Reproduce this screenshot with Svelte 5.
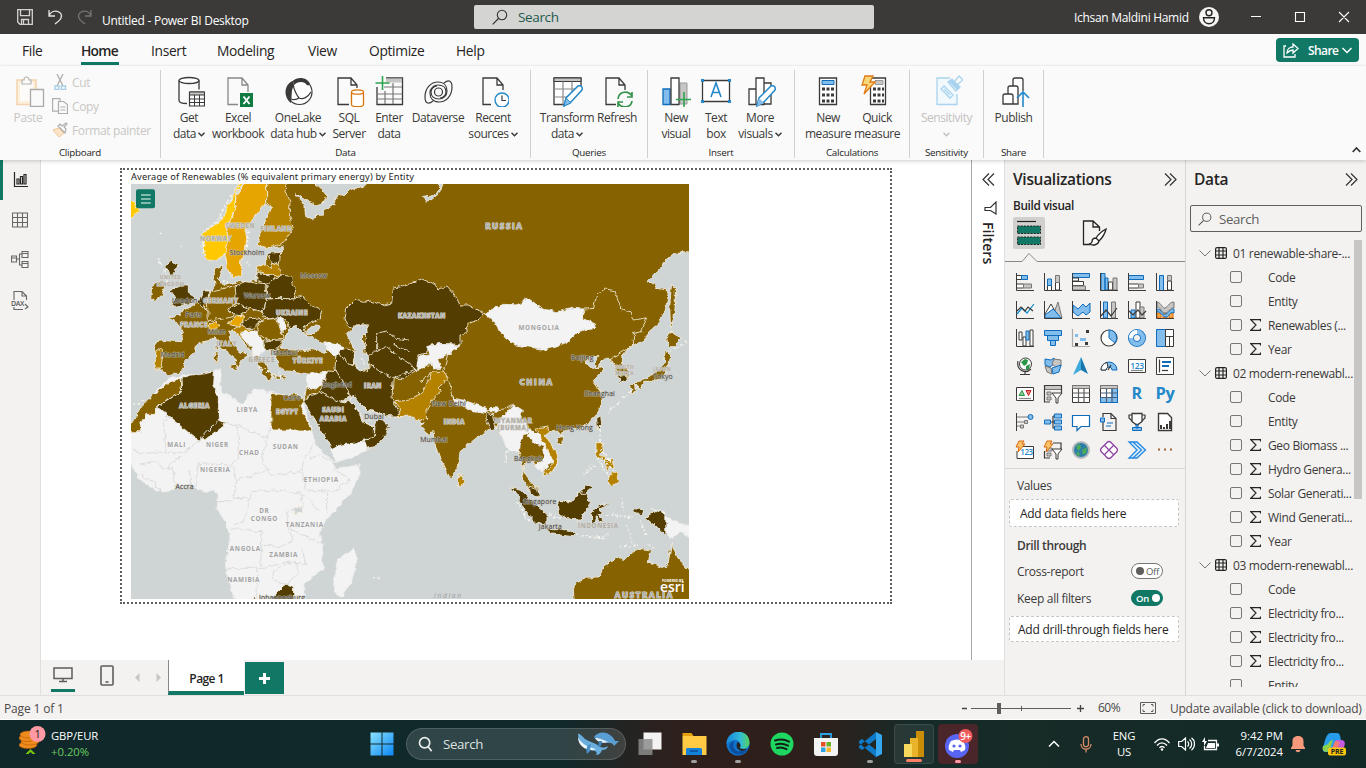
<script>
  const K = '#3b3a39';
  const B = '#0f6cbd';
  const ribbon = [
    { name: 'Data', w: 370, pad: 4, items: [
      { w: 48, l: ['Get', 'data'], dd: 1, svg: `<path d="M6 5.500v20c0 2 3 3 8 3M26 5.500v9" fill="none" stroke="${K}" stroke-width="1.3"/><ellipse cx="16" cy="5.500" rx="10" ry="3" fill="#fff" stroke="${K}" stroke-width="1.3"/><path d="M16.500 17h15v14h-15z" fill="#fff" stroke="${K}" stroke-width="1.200"/><path d="M16.500 17h15v3h-15z" fill="#c8c6c4" stroke="${K}"/><path d="M16.500 24h15M16.500 27.500h15M21.500 20v11M26.500 20v11" stroke="${K}"/>` },
      { w: 50, l: ['Excel', 'workbook'], svg: `<path d="M16 29.500H6V3h14l6 7v7M20 3v7h6" fill="none" stroke="#888" stroke-width="1.300"/><rect x="18" y="18" width="13" height="14" fill="#107c41"/><path d="M21.500 21.500l6 7.500M27.500 21.500l-6 7.500" stroke="#fff" stroke-width="2"/>` },
      { w: 70, l: ['OneLake', 'data hub'], dd: 1, svg: `<circle cx="17.500" cy="17" r="12.500" fill="#fff" stroke="${K}" stroke-width="1.200"/><path d="M11 6C2 9 1 22 9 28c1-7 0-13 3-18z" fill="${K}"/><path d="M11 6C15 1 26 2 28 9c-1 2-3 2-5-1-4-2-8-1-11 2z" fill="${K}"/><path d="M11 9c1 6 3 10 6 14 4 2 9-1 12-6M17 23c-3 2-5 2-8 1" fill="none" stroke="${K}" stroke-width="1.300"/>` },
      { w: 32, l: ['SQL', 'Server'], svg: `<path d="M16 29.500H5V3h13l6 7v3M18 3v7h6" fill="none" stroke="${K}" stroke-width="1.300"/><path d="M18.500 17.500v12c0 3 12 3 12 0v-12" fill="#fff" stroke="#d8750a" stroke-width="1.300"/><ellipse cx="24.500" cy="17" rx="6" ry="2.200" fill="#fff" stroke="#d8750a" stroke-width="1.300"/>` },
      { w: 48, l: ['Enter', 'data'], svg: `<path d="M4 12v17.500h25.500V3H13" fill="none" stroke="${K}" stroke-width="1.300"/><path d="M13 3.500h16v4H13z" fill="#c8c6c4"/><path d="M11 12h18M4 19h25M4 24h25M12 16v13M20 8v21" stroke="#777" stroke-width="1.200"/><path d="M9.500 1v14M2.500 8h14" stroke="#2ea44f" stroke-width="1.600"/>` },
      { w: 50, l: ['Dataverse'], svg: `<g fill="none" stroke="${K}" stroke-width="1.200"><path d="M22 8c5-4 8-2 8 4 0 9-6 15-13 15-6 0-9-4-9-9s4-8 8-8c5 0 8 3 8 7 0 3-3 6-6 6"/><path d="M11 26c-5 4-8 2-8-4C3 13 9 7 16 7c6 0 9 4 9 9s-4 8-8 8c-5 0-8-3-8-7 0-3 3-6 6-6"/><circle cx="16.500" cy="17" r="4"/></g>` },
      { w: 60, l: ['Recent', 'sources'], dd: 1, svg: `<path d="M14 29.500H6V3h14l6 7v5M20 3v7h6" fill="none" stroke="${K}" stroke-width="1.300"/><circle cx="25" cy="25" r="7" fill="#fff" stroke="#2488c9" stroke-width="1.400"/><path d="M25 20.500v5h4" fill="none" stroke="${K}" stroke-width="1.200"/>` }
    ] },
    { name: 'Queries', w: 117, pad: 10, items: [
      { w: 52, l: ['Transform', 'data'], dd: 1, svg: `<path d="M13 29.500H3V3h27v8" fill="#fff" stroke="${K}" stroke-width="1.300"/><path d="M3 3h27v3.500H3z" fill="#c8c6c4" stroke="${K}"/><path d="M3 14h22M3 22h14M12 6.500v23M21 6.500v12" stroke="#888" stroke-width="1.200"/><path d="M13 31l2-8 12-12c3-1 5 1 4 4L20 27z" fill="#fff" stroke="#2488c9" stroke-width="1.500"/><path d="M13 31l2-8 5 5z" fill="#83bdeb" stroke="#2488c9"/>` },
      { w: 48, l: ['Refresh'], svg: `<path d="M15 29.500H5V3h13l6 7v5M18 3v7h6" fill="none" stroke="${K}" stroke-width="1.300"/><path d="M17 24c1-8 10-9 14-3M31 17v5h-5M31 26c-1 7-10 8-14 2M17 32v-5h5" fill="none" stroke="#37924c" stroke-width="1.700"/>` }
    ] },
    { name: 'Insert', w: 147, pad: 8, items: [
      { w: 40, l: ['New', 'visual'], svg: `<path d="M3 14h7v15.500H3z" fill="#83bdeb" stroke="${B}" stroke-width="1.300"/><path d="M20 8h7v21h-7z" fill="#c8c6c4" stroke="#999"/><path d="M11 3h8v26.500h-8z" fill="#fff" stroke="${K}" stroke-width="1.300"/><path d="M24 17v15M16 24.500h15" stroke="#2ea44f" stroke-width="1.600"/>` },
      { w: 40, l: ['Text', 'box'], svg: `<path d="M2.500 5.500h27v21h-27z" fill="#fff" stroke="${K}" stroke-width="1.300"/><path d="M1 4h3v3H1zM28 4h3v3h-3zM1 25h3v3H1zM28 25h3v3h-3z" fill="#2488c9"/><path d="M11 22l5-14 5 14M12.500 17.500h7" fill="none" stroke="#2488c9" stroke-width="1.600"/>` },
      { w: 48, l: ['More', 'visuals'], dd: 1, svg: `<path d="M5 14h7v15.500H5zM12 3h8v26.500h-8zM20 8h7v21h-7z" fill="#fff" stroke="${K}" stroke-width="1.300"/><path d="M13 31l2-8 12-12c3-1 5 1 4 4L20 27z" fill="#fff" stroke="#2488c9" stroke-width="1.500"/><path d="M13 31l2-8 5 5z" fill="#83bdeb"/>` }
    ] },
    { name: 'Calculations', w: 115, pad: 9, items: [
      { w: 48, l: ['New', 'measure'], svg: `<path d="M7.500 3h17v26.500h-17z" fill="#fff" stroke="${K}" stroke-width="1.300"/><path d="M10 5.500h12v4H10z" fill="#83bdeb" stroke="${B}"/><path d="M10 14h12M10 20h12M10 26h12" stroke="${K}" stroke-width="3" stroke-dasharray="3 1.500"/>` },
      { w: 50, l: ['Quick', 'measure'], svg: `<path d="M9.500 3h15v26.500h-15z" fill="#fff" stroke="${K}" stroke-width="1.300"/><path d="M14 5.500h8v4h-8z" fill="#c8c6c4" stroke="#999"/><path d="M12 14h11M12 20h11M12 26h11" stroke="${K}" stroke-width="3" stroke-dasharray="3 1.500"/><path d="M4 1h8l-3 6h5L3 19l3-9H1z" fill="#fbd77b" stroke="#e07a12" stroke-width="1.300"/>` }
    ] },
    { name: 'Sensitivity', w: 74, pad: 0, items: [
      { w: 73, l: ['Sensitivity', ''], dd: 1, off: 1, svg: `<g fill="none" stroke="#a9d3ee" stroke-width="1.300"><path d="M19 3H6v26.500h20V19" fill="#f2f9fd"/><path d="M10 14l3-3 9 9-3 3zM13 14l6 6"/><path d="M17 7l4-3 8 8-4 4zM24 6l4-5 4 4-5 4"/></g><path d="M18 7l3-3 8 8-3 3z" fill="#a9d3ee"/>` }
    ] },
    { name: 'Share', w: 60, pad: 0, items: [
      { w: 59, l: ['Publish'], svg: `<g fill="#fff" stroke="${K}" stroke-width="1.300"><path d="M15 11V5c0-2 1-2 2-2h6c2 0 2 1 2 2v11M10 19v-6c0-2 1-2 2-2h6c2 0 2 1 2 2v16H5V21c0-2 1-2 2-2h6c2 0 2 1 2 2v8"/></g><path d="M25 32V17M19 23l6-6 6 6" fill="none" stroke="#2488c9" stroke-width="1.600"/>` }
    ] }
  ];

  const L = 'fill="#83bdeb" stroke="#0f6cbd"';
  const G = 'fill="#c8c6c4" stroke="#797775"';
  const W = `fill="#fff" stroke="${K}"`;
  const ax = `<path d="M.5 0v17.500H18" fill="none" stroke="${K}"/>`;
  const line = (d, c = K) => `<path d="${d}" fill="none" stroke="${c}" stroke-width="1.200"/>`;
  const bolt = '<path d="M3 0h5L6 3h3L2 11l1-5H0z" fill="#fbc36b" stroke="#d8690a"/>';
  const vizIcons = [
    `<path d="M.5 2.500h5v4h-5z" ${W}/><path d="M5.500 2.500h6v4h-6z" ${L}/><path d="M.5 11h7v4h-7z" ${W}/><path d="M7.500 11h8v4h-8z" ${G}/>${ax}`,
    `<path d="M3.500 12.500h4v5h-4zM11.500 9h4v8h-4z" ${W}/><path d="M3.500 6h4v6.500h-4z" ${L}/><path d="M11.500 2.500h4v7h-4z" ${G}/>${ax}`,
    `<path d="M.5.5h17v4H.5z" ${L}/><path d="M.5 5h6v3h-6zM.5 8.500h11v4H.5z" ${W}/><path d="M.5 13h13v4H.5z" ${G}/>${ax}`,
    `<path d="M1 .5h4v17H1zM5 5h3v12H5z" ${L}/><path d="M8.500 9h4v8h-4z" ${W}/><path d="M13 5h4v12h-4z" ${G}/>${ax}`,
    `<path d="M.5 2.500h15v4H.5z" ${L}/><path d="M.5 11h10v4H.5z" ${W}/><path d="M10.500 11h5v4h-5z" ${G}/>${ax}`,
    `<path d="M3.500 2.500h4v15h-4z" ${L}/><path d="M11.500 8h4v9h-4z" ${W}/><path d="M11.500 2.500h4v5h-4z" ${G}/>${ax}`,
    ax + line('M1 13l5-6 5 5 7-9', '#0f8fd0') + line('M1 10l4-4 4 4 3-4 5 4'),
    `<path d="M8 17l6-16 4 16z" ${G}/><path d="M1 13l6-10 8 14H1z" ${W}/><path d="M1 17v-3l4-3 4-3 3 3 5 6z" ${L}/>${ax}`,
    `<path d="M1 4l5 4 5-5 3 3 4-4v9l-4 3-3-3-5 4-5-4z" ${L}/>${ax}`,
    `<path d="M3.500 1h4v16h-4z" ${L}/><path d="M11.500 1h4v16h-4z" ${G}/>${ax}` + line('M1 15l5-6 5 6 6-8'),
    `<path d="M3 9h4v8H3z" ${L}/><path d="M8 1h4v16H8z" ${W}/><path d="M12 6h4v11h-4z" ${G}/>${ax}` + line('M1 10l4 4 5-5 4 5 4-4'),
    `<path d="M1 12h4v5H1zM7 12h4v5H7zM13 12h4v5h-4z" fill="#f7a946" stroke="#d8690a"/><path d="M1 8c5 0 5 7 9 5s4-6 8-5v4c-5-2-4 4-8 4S5 10 1 11z" ${L}/><path d="M1 1c5 1 5 7 8 6s4-6 9-6v6c-4-1-5 5-9 5S5 6 1 6z" ${G}/>${ax}`,
    ax + `<path d="M3 3h3v8H3zM7 8h3v9H7z" ${W}/><path d="M10 2h3v9h-3z" ${L}/><path d="M14 1h3v16h-3z" ${W}/>`,
    `<path d="M.5 1.500h17v5H.5zM3.500 6.500h11v5h-11zM6.500 11.500h5v5h-5z" ${L}/>`,
    `<path d="M3 14h3v3H3zM14 1h3v3h-3zM13 13h3v3h-3z" fill="${K}"/><path d="M3 5h3v3H3zM8 9h3v3H8zM14 12h-3v-3h3z" fill="#83bdeb"/>` + line('M.5 0v17.500H18', '#aaa'),
    `<circle cx="9" cy="9" r="8" ${W} stroke-width="1.200"/><path d="M9 1a8 8 0 0 1 6 13L9 9z" ${L}/>`,
    `<circle cx="9" cy="9" r="6" fill="none" stroke="#0f6cbd" stroke-width="6"/><circle cx="9" cy="9" r="6" fill="none" stroke="#83bdeb" stroke-width="4.400"/><path d="M3 9a6 6 0 0 1 6-6" fill="none" stroke="#fff" stroke-width="4"/>`,
    `<path d="M.5.5h9v17h-9z" ${L}/><path d="M9.500.5h8v7h-8zM9.500 7.500h4v10h-4zM13.500 7.500h4v10h-4z" ${W}/>`,
    `<circle cx="9.500" cy="7" r="6" ${W}/><path d="M5 5l4-3 3 1-1 4-3 2zM10 9l4-2-1 5-3 1z" fill="#2a9547"/>` + line('M2 4c-2 10 8 13 13 8M9 14v3M4 17.500h10', K),
    `<path d="M1 2l6 1 3-2v6l-4 3-5-2z" ${L}/><path d="M10 2l7 1v6l-5 1-4-3z" ${G}/><path d="M1 9l6 2 1 6-5-2z" ${G}/><path d="M8 11l9-3-2 7-6 2z" ${L}/>`,
    `<path d="M9 0l7 17-7-4z" fill="#1878ae"/><path d="M9 0v13l-8 5z" fill="#3fa9dc"/>`,
    `<path d="M1 13A8 8 0 0 1 17 13h-5a3 3 0 0 0-6 0z" ${L}/><path d="M1 13A8 8 0 0 1 7 5.500l1 4.800A3 3 0 0 0 6 13z" ${W}/>` + line('M11 8l-3 5'),
    `<path d="M.5 2.500h17v13H.5z" ${W}/><text x="9" y="11.500" font-size="8.500" font-weight="600" text-anchor="middle" fill="#2488c9">123</text>` + line('M3 13.500h12', '#888'),
    `<path d="M.5.5h17v17H.5z" ${W}/>` + line('M3.500 2.500v13') + `<path d="M6 4h9v2H6zM6 8h7v2H6z" fill="#0f6cbd"/>` + line('M6 13.500h6'),
    `<path d="M.5 2.500h17v13H.5z" ${W}/><path d="M3 10.500l3-5 2.500 5z" fill="#8fcb9b" stroke="#2a9547"/><path d="M10 5.500h5l-2.500 5z" fill="#e8837b" stroke="#c02323"/>` + line('M3 13.500h12', '#888'),
    `<path d="M.5.5h17v4H.5z" ${G}/>` + line('M6 17H.5V.5h17V9') + `<path d="M3 7h4v3H3zM3 12h4v3H3z" ${G}/><path d="M8 8h10l-4 5v5h-2v-5z" ${W}/>`,
    `<path d="M.5.500h17v17H.5z" ${W}/><path d="M.5.5h17v3H.5z" ${G}/>` + line('M.5 8h17M.5 12.500h17M6.500 3.500v14M12 3.500v14', '#605e5c'),
    `<path d="M.5.500h17v17H.5z" ${W}/><path d="M12 3.500h5.500v14H.5V12.500H12z" ${L}/><path d="M.5.5h17v3H.5z" ${G}/>` + line('M.5 8h17M.5 12.500h17M6.500 3.500v14M12 3.500v14', '#4a6078'),
    `<text x="8.500" y="14" font-size="16" font-weight="700" text-anchor="middle" fill="#2488c9">R</text>`,
    `<text x="9" y="14" font-size="16.500" font-weight="700" text-anchor="middle" fill="#2488c9">Py</text>`,
    `<path d="M.5 0v18" stroke="${K}"/>` + line('M1 4h12M1 9h8M1 13h4', '#777') + `<circle cx="14.500" cy="4" r="2.500" ${L}/><path d="M8.500 7.500h3v3h-3zM4.500 12h3v3h-3z" ${G}/>`,
    line('M6 9h3M9 3v12h2M9 3h2M9 9h2') + `<path d="M.5 7h6v4h-6zM10.500 1h7v4h-7zM10.500 7h7v4h-7zM10.500 13h7v4h-7z" ${L}/>`,
    `<path d="M.5 2.500h17v11H9l-4 4v-4H.5z" fill="#fff" stroke="#0f6cbd" stroke-width="1.200"/>`,
    line('M3 4V.500h8l5 5v12H3V9') + line('M11 .5v5h5') + line('M7 10h6M6 13h5', '#0f6cbd') + `<path d="M.5 5h4v4h-4z" ${L}/>`,
    line('M4 2H1v3l4 4M14 2h3v3l-4 4') + `<path d="M4 .5h10v8l-4 3H8l-4-3z" fill="#fff" stroke="${K}" stroke-width="1.300"/><path d="M8 12h2v3H8zM4.500 14.500h9v3h-9z" ${L}/>`,
    `<path d="M2.500.5h9l4 4v13h-13z" fill="#fff" stroke="${K}" stroke-width="1.400"/><path d="M4 12h2v4H4zM7 14h2v2H7zM10 11h2v5h-2zM13 8h2v8h-2z" fill="${K}"/>`,
    `<path d="M3 5.500h14.500v12H1V10" ${W}/><text x="10.500" y="14" font-size="8" font-weight="600" text-anchor="middle" fill="#2488c9">123</text>` + bolt,
    line('M6 17H.5V10M9 2h8v7') + `<path d="M3 7h5v3H3zM3 12h4v3H3z" ${G}/><path d="M8 8h10l-4 5v5h-2v-5z" ${W}/>` + bolt,
    `<circle cx="9" cy="9" r="8" fill="#2d7ea8" stroke="#b5babb" stroke-width="2"/><path d="M4 5l4-2 1 4-3 3zM10 9l5-3-1 6-3 2zM4 12l3-1 1 3-2 1z" fill="#4dac55"/>`,
    `<g fill="#fff" stroke="#8a3e9e" stroke-width="1.200"><path d="M7 1.500c1.500-1.500 2.500-1.500 4 0l5.500 5.500c1.500 1.500 1.500 2.500 0 4L11 16.500c-1.500 1.500-2.500 1.500-4 0L1.500 11c-1.500-1.500-1.500-2.500 0-4z"/><path d="M4.500 4.500l9 9M13.500 4.500l-9 9M9 9"/></g>`,
    `<path d="M1 1h8l8.500 8L9 17H1l8-8z" fill="#d8ebfa" stroke="#2488e0" stroke-width="1.300"/><path d="M5 1l8.500 8L5 17" fill="none" stroke="#2488e0" stroke-width="1.200"/>`,
    `<path d="M2 8.500h2M8 8.500h2M14 8.500h2" stroke="#a5643a" stroke-width="2"/>`
  ];

  const fields = [
    ['t', '01 renewable-share-...'], ['f', 'Code'], ['f', 'Entity'], ['s', 'Renewables (...'], ['s', 'Year'],
    ['t', '02 modern-renewabl...'], ['f', 'Code'], ['f', 'Entity'], ['s', 'Geo Biomass ...'], ['s', 'Hydro Genera...'],
    ['s', 'Solar Generati...'], ['s', 'Wind Generati...'], ['s', 'Year'],
    ['t', '03 modern-renewabl...'], ['f', 'Code'], ['s', 'Electricity fro...'], ['s', 'Electricity fro...'], ['s', 'Electricity fro...'], ['f', 'Entity']
  ];

  const cities = [
    ['Stockholm', 381, 270], ['Moscow', 582, 339], ['Warsaw', 411, 400], ['London', 194, 413], ['Paris', 221, 455],
    ['Milan', 291, 506], ['Madrid', 158, 577], ['Istanbul', 493, 569], ['Baghdad', 652, 667], ['Cairo', 517, 706],
    ['Dubai', 762, 762], ['Accra', 194, 972], ['Beijing', 1387, 584], ['Tokyo', 1629, 643], ['Shanghai', 1439, 693],
    ['New Delhi', 987, 724], ['Mumbai', 942, 832], ['Bangkok', 1225, 888], ['Hong Kong', 1364, 796],
    ['Singapore', 1259, 1016], ['Jakarta', 1291, 1093], ['Johannesburg', 486, 1306]
  ];
  const lands = [
    ['NORWAY', 288, 229, 1], ['SWEDEN', 361, 189, 1], ['FINLAND', 469, 198, 1], ['UNITED', 152, 343, 2], ['KINGDOM', 152, 362, 2],
    ['GERMANY', 302, 413, 1], ['FRANCE', 222, 486, 1], ['ITALY', 320, 542, 1], ['GREECE', 425, 591, 1], ['UKRAINE', 516, 449, 1],
    ['TÜRKIYE', 564, 593, 1], ['KAZAKHSTAN', 906, 460, 1], ['IRAN', 759, 669, 1], ['SAUDI', 640, 742, 1], ['ARABIA', 640, 769, 1],
    ['EGYPT', 502, 748, 1], ['ALGERIA', 224, 729, 1], ['LIBYA', 382, 740, 0], ['MALI', 170, 847, 0], ['NIGER', 292, 847, 0],
    ['CHAD', 388, 869, 0], ['SUDAN', 497, 853, 0], ['NIGERIA', 286, 920, 0], ['ETHIOPIA', 604, 950, 0], ['DR', 433, 1044, 0],
    ['CONGO', 433, 1069, 0], ['TANZANIA', 554, 1085, 0], ['ANGOLA', 376, 1157, 0], ['ZAMBIA', 491, 1176, 0], ['NAMIBIA', 371, 1252, 0],
    ['MONGOLIA', 1257, 494, 0], ['INDIA', 1003, 776, 1], ['MYANMAR', 1181, 774, 1], ['(BURMA)', 1180, 796, 1], ['INDONESIA', 1435, 1090, 1],
    ['SOUTH', 1514, 612, 2], ['KOREA', 1514, 631, 2], ['JAPAN', 1627, 618, 2]
  ];
  const D = '#533d00', M = '#876200', T = '#b58200', O = '#e6a500', Y = '#ffc800', N = '#f3f3f3', S = '#cfd4d5';
  const shapes = [
    [M, 'M375 57L500 40H1720V265L1700 263L1665 265L1640 285L1620 310L1600 330L1580 350L1605 355L1612 370L1645 375L1643 400L1635 440L1620 470L1590 500L1570 525L1545 540L1525 550L1505 575L1508 595L1525 620L1525 638L1495 642L1490 625L1484 603L1475 580L1455 580L1440 598L1430 608L1422 598L1437 570L1410 578L1395 590L1405 603L1422 610L1445 605L1452 612L1425 640L1420 650L1440 675L1448 700L1440 730L1425 755L1400 775L1380 790L1345 795L1325 800L1325 812L1310 795L1290 800L1277 810L1280 825L1305 860L1313 885L1310 910L1280 930L1270 935L1265 915L1245 900L1240 890L1220 890L1210 907L1215 925L1235 955L1255 970L1258 995L1245 995L1228 980L1220 960L1205 940L1210 915L1203 880L1195 855L1165 860L1155 835L1135 800L1130 785L1102 795L1080 810L1020 860L1015 905L995 938L985 935L960 880L943 835L940 800L920 805L900 785L915 775L890 760L880 753L830 755L790 748L745 738L720 718L700 692L688 698L660 712L553 712L556 690L560 660L565 628L530 620L500 618L475 605L470 585L465 560L430 555L410 570L440 600L460 640L440 645L420 610L400 580L395 560L360 520L340 495L325 500L330 525L360 560L385 570L365 585L355 605L345 600L350 585L330 570L300 545L285 515L265 530L240 535L225 545L225 560L195 585L190 610L180 625L160 625L145 630L130 620L105 612L108 580L103 545L108 530L130 527L185 530L188 500L165 470L150 455L180 450L190 435L215 425L240 405L250 385L275 375L285 360L280 330L285 310L305 300L305 325L295 345L320 360L350 350L380 350L415 345L410 320L415 300L440 310L440 270L480 262L490 245L440 248L415 240L420 200L450 140L455 125L430 120L410 145L375 190Z'],
    [N, 'M0 820L33 800L100 690L145 640L280 618L305 615L300 680L340 700L370 720L385 690L410 670L440 680L495 690L545 690L550 715L575 795L585 835L610 865L640 890L645 910L720 900L720 925L690 990L640 1040L610 1075L600 1105L605 1160L610 1210L555 1255L550 1330H350L315 1200L330 1120L320 1080L290 1030L295 1000L285 975L250 980L215 965L120 980L60 945L33 895L0 890Z'],
    [M, 'M20 800L45 760L65 725L100 690L145 655L180 640L185 680L110 725L105 748H75L62 778V800Z'],
    [D, 'M110 725L185 680L183 640L215 630L280 618L278 660L295 690V765L317 776L255 824L232 824Z'],
    [M, 'M453 685L495 690L545 690L552 710L540 725L575 795H453Z'],
    [D, 'M553 715L570 690L600 680L665 712L690 705L735 775L765 787L760 818L700 835L635 850L600 790Z'],
    [N, 'M635 852L650 842L700 835L738 828L743 850L715 870L645 893Z'],
    [D, 'M732 773L765 785L775 755L805 785L797 810L765 845L740 850L735 830L763 812L765 787Z'],
    [N, 'M560 628L620 620L612 650L585 675L560 665Z'], [D, 'M620 618L655 620L670 650L690 695L660 712L598 680L612 655Z'],
    [D, 'M648 560L680 560L700 575L700 600L740 620L752 605L800 602L820 630L816 700L845 753L800 752L745 735L720 715L695 698L670 650L645 610Z'],
    [N, 'M610 530L645 535L675 548L665 565L645 575L622 553Z'], [D, 'M655 560L680 550L705 565L700 600L680 595Z'],
    [D, 'M675 460L680 430L705 405L730 412L750 408L790 420L815 415L820 370L840 365L905 342L925 350L960 372L980 362L1005 390L1020 420L1045 420L1090 445L1075 465L1040 475L1045 500L1020 510V540L985 535L930 540L920 565L890 570L905 590L890 615L850 640H820L780 620L745 595L735 545L745 480L710 480L690 490L680 475Z'],
    ['none', 'M770 560V505L800 498L825 520L870 525M770 560L800 545L830 570L870 595L890 620M745 575L775 548M820 540L870 560'],
    [N, 'M920 545L960 535L1020 542L990 565L955 580L965 610L940 612L930 592L910 612L890 612L895 575L930 570Z'],
    [T, 'M925 650L935 622L970 618L985 640L958 665L960 680L935 705L918 735L920 760L888 768L880 753L830 755L845 735L825 710L870 705L900 685Z'],
    [N, 'M1092 445L1150 418L1200 420L1210 398L1245 415L1260 430L1310 440L1360 430L1392 432L1385 460L1425 475L1420 488L1375 500L1350 525L1320 540L1270 553L1190 540L1140 505L1128 475Z'],
    ['none', 'M1392 432L1420 430L1430 390L1455 372L1485 378L1505 435L1530 440L1540 465L1580 458L1565 500L1540 505V540L1475 580M1020 540L985 560L970 618M820 640L880 615L930 600M985 640L1000 700L1060 730L1100 740L1165 730L1180 715M935 622L900 650'],
    [N, 'M1000 700L1030 705L1100 730L1098 743L1060 737L1010 720Z'], [N, 'M1110 727L1138 730L1130 742L1108 740Z'],
    [D, 'M1102 745L1120 750L1128 790L1110 795L1098 760Z'],
    [N, 'M1130 785L1140 765L1180 720L1208 735L1200 760L1225 785L1235 800L1205 810L1198 860L1165 860L1155 835Z'],
    [N, 'M1235 795L1260 815L1285 845L1300 885L1265 920L1243 900L1275 880L1270 845L1240 835L1225 810Z'],
    [T, 'M1245 790L1285 783L1290 800L1275 812L1305 860L1313 885L1310 910L1270 935V920L1295 905L1298 885L1270 830Z'],
    [D, 'M1225 963L1252 970L1258 995L1245 995L1228 980Z'],
    [D, 'M1173 966L1202 973L1244 1018L1281 1048V1080L1250 1075L1220 1044L1198 1000Z'],
    [D, 'M1278 1091H1320L1371 1105L1360 1115L1295 1107Z'],
    [D, 'M1313 1008L1345 1013L1385 978L1400 956L1418 967L1397 985L1412 1015L1392 1045L1382 1066L1350 1060L1319 1048Z'],
    ['none', 'M1313 1010L1355 1010L1375 985L1395 985'],
    [D, 'M1414 1046L1425 1034L1440 1019L1477 1015L1437 1031L1452 1041L1434 1049L1450 1073L1438 1068L1429 1052L1426 1077L1415 1071Z'],
    [D, 'M1540 1031L1571 1034L1566 1049L1545 1046Z'], [D, 'M1576 1058L1610 1038L1638 1052V1115L1605 1083Z'],
    [N, 'M1638 1053L1680 1075L1720 1085V1125L1680 1100L1655 1120L1638 1113Z'],
    [M, 'M1365 1255L1400 1240L1440 1235L1450 1205L1500 1175L1510 1185L1555 1150L1595 1155L1585 1190L1635 1210L1645 1190L1655 1135L1670 1175L1720 1230V1330H1365L1360 1275Z'],
    [T, 'M1020 926L1036 955L1018 966L1011 945Z'], [D, 'M1430 763L1442 755L1445 780L1433 794Z'], [M, 'M1308 819L1331 815L1328 835L1312 837Z'],
    [T, 'M1428 833L1446 829L1450 855L1438 865L1460 880L1455 890L1428 870Z'], [T, 'M1465 934L1489 922L1495 950L1475 965L1462 948Z'], [T, 'M1454 885L1476 880L1482 905L1465 916Z'],
    [M, 'M1640 518L1650 500L1685 520L1660 545H1645Z'], [M, 'M1635 558L1652 570L1647 600L1627 637L1570 653L1558 672L1545 655L1580 638L1608 623L1633 595Z'], [M, 'M1529 660L1546 654L1550 680L1535 687Z'],
    [D, 'M1495 632L1515 628L1520 645L1500 652Z'], [M, 'M1654 360L1666 365V420L1662 460L1652 490L1649 430Z'],
    [N, 'M702 1148L712 1180L695 1250L665 1295L642 1280L650 1190Z'],
    [D, 'M460 1295L490 1265L500 1258L520 1265L522 1310H465Z'], [D, 'M403 1290L410 1310H400Z'],
    [Y, 'M375 45L348 80L345 110L345 135L330 160L320 190L325 230L315 270L300 280L270 290L252 270L245 210L270 190L310 160L330 110L355 57Z'],
    [O, 'M372 57L440 40L440 110L412 145L378 190L380 220L375 260L365 290V330L337 340L322 300L315 270L325 230L320 190L345 135L348 90Z'],
    [T, 'M440 45H500L495 80L510 110L508 150L520 190L490 235L440 248L415 240L420 200L450 140L455 125L440 115Z'],
    [D, 'M440 265L482 262L478 298L455 290Z'], [T, 'M412 305L430 298L450 312L455 292L478 300L483 330L460 332L415 320Z'], [D, 'M412 322L460 332L465 345L440 362L410 345Z'],
    [D, 'M440 362L465 340L485 330L515 335L520 360L530 375L522 402L440 400Z'], [D, 'M345 362L380 350L435 360L440 400L430 440L405 435L350 415L343 395Z'],
    [D, 'M325 430L360 418L388 432L360 452L335 448Z'], [D, 'M365 475L385 462L420 458L425 465L400 490L372 490Z'], [O, 'M325 478L345 455L370 450L368 470L355 485Z'], [O, 'M265 480L290 470L300 482L285 490H268Z'],
    [T, 'M108 550L130 555L122 612H105Z'], [D, 'M430 440L440 402L480 400L522 402L545 392L570 420L605 435L600 460L550 485L556 505L540 500L528 485L510 490L495 465L475 455L450 462L425 455Z'],
    [N, 'M470 456L485 460L500 490L485 500Z'], [M, 'M425 465L465 460L480 490L490 520L440 525L415 505L410 490Z'], [D, 'M430 528L485 525L478 550L440 558Z'],
    [N, 'M360 505L395 495L412 500L428 530L435 560L400 575L395 550L370 525Z'], [T, 'M340 495L365 480L395 498L360 502L370 525Z'], [D, 'M240 400L250 378L270 378L262 405L250 420L262 435L235 415Z'],
    [M, 'M270 380L345 362L350 415L325 430L340 455L265 470L262 405Z'],
    [D, 'M140 300L150 280L160 295L175 300L160 325L165 340L150 330Z'], [D, 'M150 375L185 360L205 360L205 385L222 395L215 415L155 425L165 400Z'], [M, 'M95 365L125 345L135 370L125 395L92 405Z'],
    [Y, 'M20 100L45 115L55 135L40 158L20 160Z'], [M, 'M325 605L350 600L353 618Z'], [M, 'M283 563L295 565L293 590H283Z'], [M, 'M285 540L292 540V558L286 555Z'], [M, 'M460 628L500 635L495 642L462 638Z'],
    [S, 'M710 480L740 480L745 500L725 520L735 545L730 560L745 575L748 612L715 615L700 590L705 560L690 530L680 505Z'],
    [S, 'M510 490L530 485L545 500L550 507L575 515L600 530L620 545V563L570 552L530 556L483 550L490 525Z'], [S, 'M590 480L600 483L585 505L555 507L565 492Z'],
    [S, 'M700 690L720 715L745 735L775 745L760 765L735 765L715 740L690 705Z'], [S, 'M527 85L555 105L590 122L612 115L620 92L600 67L580 50H740L735 62L690 75L675 90L655 85L640 120L610 135V150L585 152L575 165L555 150V125Z'],
    [S, 'M950 50L962 70L945 90L910 98L920 108L935 106L955 90L968 60V50Z'], [S, 'M520 1025L545 1022L545 1045L525 1048Z']
  ];
  const borders = 'M110 725L150 760L130 765L138 860M138 860L70 865L40 855M138 860L175 865L210 850L240 825M210 850L180 880L155 890L140 915M60 900L110 890L140 915L160 910L165 965M205 910L215 965M225 965L235 895L330 900L355 885V825L350 780L317 776M350 780L440 820L453 785M440 820L425 890L445 915L350 945L335 900M440 915L455 930L545 920L550 890L570 855L580 835M570 880L600 870L640 895M545 920L560 975L640 980L690 945L640 915M620 985V1040M395 980L470 975L545 985L550 1020L500 1040L505 1090L520 1125L490 1145L425 1140V1100L330 1090M395 980L370 1070L340 1080M350 945L340 1000L390 1000M505 1090L600 1135L610 1135M545 1150L560 1200L500 1190L430 1210H320M425 1140L422 1205M460 1220L500 1195L530 1190L535 1225L500 1258L460 1245ZM410 1210L412 1310M65 930L100 950L120 980M290 1010H340M545 985L600 1040M240 825L295 765';
  const specks = 'M115 280l10 25M130 320l12 30M125 300l14 20M183 240l3 12M120 205l5 3M252 200l60-50M248 215l4 50M300 150l35-60M380 290l8 12M385 200l-4 50M310 345l14 10M410 590l20 30M430 610l40 25M478 620l5 20M1160 860l-6 35M1190 1010l40 65M1290 1050l35 12M1390 930l30-30M1425 865l40 70M1445 875l42 50M1440 850l40 50M1370 1110l90 12M1460 1050l80 5M1505 1000l4 40M1520 1080l20 60M1560 1070l20 40M1590 1030l50 15M1440 780v50M1460 745l80-75M1650 560l50-30M1500 1145l60-5M1600 1150l-20-15M725 580l10 20M760 1240h20M540 892l40-8M1420 1120l50-12M40 720l30-12';
</script>

{#snippet mag(s, c)}
  <svg width={s} height={s} viewBox="0 0 16 16"><circle cx="10" cy="6" r="4.700" fill="none" stroke={c} stroke-width="1.100" /><path d="M6.500 9.500L.7 15.300" stroke={c} stroke-width="1.200" /></svg>
{/snippet}
{#snippet chev(c, flip)}
  <svg width="13" height="13" viewBox="0 0 13 13" fill="none" stroke={c} stroke-width="1.200" style:transform={flip ? 'scaleX(-1)' : ''}><path d="M1 .5l6 6-6 6M6 .5l6 6-6 6" /></svg>
{/snippet}

<div class="app">
  <header class="title">
    <svg class="save" width="16" height="16" viewBox="0 0 16 16" fill="none" stroke="#d5d3d1" stroke-width="1.300"><path d="M.7.7h14.600v14.600H3L.7 13zM3.500.7v6h9v-6M4.500 15v-4.500h7V15M6.500 11v4" /></svg>
    <svg class="undo" width="15" height="16" viewBox="0 0 15 16" fill="none" stroke="#e5e3e1" stroke-width="1.300"><path d="M1 1v6h6M1 7c3-8 15-5 12 2-1 3-4 4-6 6" /></svg>
    <svg class="redo" width="15" height="16" viewBox="0 0 15 16" fill="none" stroke="#777574" stroke-width="1.300"><path d="M14 1v6H8M14 7C11-1-1 2 2 9c1 3 4 4 6 6" /></svg>
    <span class="name">Untitled - Power BI Desktop</span>
    <div class="tsearch">{@render mag(16, '#333')}<span>Search</span></div>
    <span class="user">Ichsan Maldini Hamid</span>
    <svg class="avatar" width="20" height="20" viewBox="0 0 20 20"><circle cx="10" cy="10" r="10" fill="#f5f4f3" /><circle cx="10" cy="5.700" r="3" fill="none" stroke="#222" stroke-width="1.400" /><path d="M4.500 10.700h11c0 8-11 8-11 0z" fill="none" stroke="#222" stroke-width="1.400" /></svg>
    <svg class="win" width="100" height="12" viewBox="0 0 100 12" fill="none" stroke="#fff" stroke-width="1.100"><path d="M0 5.500h10M44.500 1.500h9v9h-9zM88 1l10 10M98 1L88 11" /></svg>
  </header>

  <nav class="tabs">
    {#each [['File', 21], ['Home', 38], ['Insert', 34], ['Modeling', 59], ['View', 29], ['Optimize', 55], ['Help', 28]] as t}
      <span class:on={t[0] === 'Home'} style:width="{t[1]}px">{t[0]}</span>
    {/each}
    <button class="share"><svg width="17" height="15" viewBox="0 0 17 15" fill="none" stroke="#fff" stroke-width="1.300"><path d="M3 3H1v11h11v-3M4 10c0-4 3-6 6-6V1l5 4.500-5 4.500V7C8 7 6 8 4 10z" /></svg><b>Share</b><svg width="10" height="7" viewBox="0 0 10 7" fill="none" stroke="#fff" stroke-width="1.500"><path d="M.5 1L5 5.500 9.500 1" /></svg></button>
  </nav>

  <section class="ribbon">
    <div class="group clip">
      <div class="cliprow">
        <div class="paste"><svg width="32" height="32" viewBox="0 0 32 32"><path d="M3 5h19v24.500H3z" fill="#fdf1dc" stroke="#f3d3ae" stroke-width="1.500" /><path d="M6 8h13v18H6z" fill="#fcfbfa" /><path d="M8 5h2c0-4 5-4 5 0h2v4H8z" fill="#fafafa" stroke="#b8b6b4" stroke-width="1.200" /><path d="M16.500 14.500h13v17h-13z" fill="#fafafa" stroke="#aaa" stroke-width="1.300" /></svg><span>Paste</span></div>
        <div class="cliplist">
          <div><svg width="16" height="16" viewBox="0 0 16 16" fill="none"><path d="M5 0l6 12M11 0L5 12" stroke="#b0aeac" stroke-width="1.300" /><path d="M3 12h4v3.500H3zM9.500 12h4v3.500h-4z" stroke="#a9cfe8" stroke-width="1.400" /></svg>Cut</div>
          <div><svg width="16" height="16" viewBox="0 0 16 16" fill="#fafafa" stroke="#b0aeac" stroke-width="1.200"><path d="M.6.6H8v12.500H.6z" /><path d="M6.500 3.500h5l4 3v9h-9zM8.500 9h5M8.500 12h5" /></svg>Copy</div>
          <div><svg width="16" height="16" viewBox="0 0 16 16"><path d="M1 8l6-2 5 5-5 4z" fill="#fbe3c6" stroke="#efc796" /><path d="M6 4l7 7 1-4-2-2 3-3-1-1-4 3-2-2z" fill="#fafafa" stroke="#b0aeac" stroke-width="1.200" /></svg>Format painter</div>
        </div>
      </div>
      <div class="cap">Clipboard</div>
    </div>
    {#each ribbon as g}
      <div class="group" style:width="{g.w}px">
        <div class="row" style:padding-left="{g.pad}px">
          {#each g.items as it}
            <div class="rb" class:off={it.off} style:width="{it.w}px">
              <svg width="32" height="32" viewBox="0 0 32 32">{@html it.svg}</svg>
              <span>{it.l[0]}</span>
              {#if it.l.length > 1}<span>{it.l[1]}{#if it.dd}<svg class="dd" width="7" height="5" viewBox="0 0 7 5"><path d="M.5.7l3 3 3-3" fill="none" stroke="currentColor" stroke-width="1.500" /></svg>{/if}</span>{/if}
            </div>
          {/each}
        </div>
        <div class="cap">{g.name}</div>
      </div>
    {/each}
    <svg class="collapse" width="9" height="6" viewBox="0 0 9 6"><path d="M.7 5l3.800-4 3.800 4" fill="none" stroke="#333" stroke-width="1.700" /></svg>
  </section>

  <main>
    <aside class="rail">
      <div class="active"><svg width="16" height="16" viewBox="0 0 16 16" fill="none" stroke="#252423" stroke-width="1.200"><path d="M1.500 0v14.500H15M4 7h2v5H4zM7.500 4.500h2V12h-2zM11 2.500h2V12h-2z" /></svg></div>
      <div><svg width="16" height="16" viewBox="0 0 16 16" fill="none" stroke="#666" stroke-width="1.100"><path d="M.5 1h15v14H.5zM.5 5.500h15M.5 10.500h15M5.500 1v14M10.500 1v14" /></svg></div>
      <div><svg width="18" height="18" viewBox="0 0 18 18" fill="none" stroke="#666" stroke-width="1.100"><path d="M.5 5h5v6h-5zM.5 7h5M11 .500h6v6h-6zM11 2.500h6M11 10.500h6v6h-6zM11 12.500h6M5.500 8h3v-5H11M8.500 8v6H11" /></svg></div>
      <div><svg width="18" height="19" viewBox="0 0 18 19" fill="none" stroke="#666" stroke-width="1.100"><path d="M3 9V.5h8l4.500 4.500V9M11 .5V5h4.500M3 16v2.500h9" /><text x="0" y="15" font-size="7" font-weight="600" fill="#555" stroke="none">DAX</text><path d="M14 13l3 3-3 2" /></svg></div>
    </aside>

    <div class="center">
      <div class="work">
        <div class="stage">
          <div class="report">
            <div class="vt">Average of Renewables (% equivalent primary energy) by Entity</div>
            <svg class="map" width="558" height="415" viewBox="33 57 1674 1245">
              <defs><filter id="rough" x="-5%" y="-5%" width="110%" height="110%"><feTurbulence type="fractalNoise" baseFrequency="0.06" numOctaves="2" seed="4" /><feDisplacementMap in="SourceGraphic" scale="16" xChannelSelector="R" yChannelSelector="G" /></filter></defs>
              <rect width="1720" height="1320" fill={S} />
              <g filter="url(#rough)" stroke-linejoin="round">
                {#each shapes as s}
                  <path d={s[1]} fill={s[0]} stroke={s[0] === N ? '#eceded' : '#f4efe0'} stroke-width="2.600" />
                {/each}
                <path d={borders} fill="none" stroke="#dcdcdc" stroke-width="3" />
                <path d={specks} fill="none" stroke="#f5f4ee" stroke-width="5" stroke-dasharray="5 7 9 5" />
              </g>
              <g class="lands">
                {#each lands as l}
                  <text class:plain={!l[3]} class:small={l[3] === 2} x={l[1]} y={l[2]}>{l[0]}</text>
                {/each}
                <text class="big" x="1153" y="192">RUSSIA</text>
                <text class="big" x="1250" y="660">CHINA</text>
                <text class="big" x="1573" y="1299">AUSTRALIA</text>
              </g>
              <g class="cities">{#each cities as c}<text x={c[1]} y={c[2]}>{c[0]}</text>{/each}</g>
              <text x="985" y="1299" font-size="20" font-style="italic" text-anchor="middle" fill="#9a9fa0" letter-spacing="5">Indian</text>
              <text x="1658" y="1252" font-size="10" font-weight="700" text-anchor="middle" fill="#fff">POWERED BY</text>
              <text x="1657" y="1280" font-size="42" font-weight="600" text-anchor="middle" fill="#fff">esri</text>
              <rect x="48" y="73" width="57" height="57" rx="6" fill="#117865" />
              <path d="M63 90h29M63 102h29M63 114h29" stroke="#a9d0c6" stroke-width="4" />
            </svg>
          </div>
        </div>
        <div class="filters">
          {@render chev('#333', true)}
          <svg width="13" height="14" viewBox="0 0 13 14" fill="none" stroke="#333" stroke-width="1.200"><path d="M12 1v12L6.500 9.500H1v-3h5.500z" /></svg>
          <b>Filters</b>
        </div>
      </div>
      <footer class="pages">
        <div class="desk"><svg width="20" height="16" viewBox="0 0 20 16" fill="none" stroke="#605e5c" stroke-width="1.500"><path d="M1 1h18v10.500H1zM10 11v3M6 14.500h8" /></svg></div>
        <svg class="phone" width="14" height="21" viewBox="0 0 14 21" fill="none" stroke="#605e5c" stroke-width="1.600"><rect x="1" y="1" width="12" height="19" rx="1" /><path d="M5.500 17h3" /></svg>
        <svg width="26" height="9" viewBox="0 0 26 9" fill="#c8c6c4"><path d="M4.500 0v9L0 4.500zM21.500 0v9L26 4.500z" /></svg>
        <div class="page">Page 1</div>
        <div class="add"><svg width="11" height="11" viewBox="0 0 11 11"><path d="M5.500 0v11M0 5.500h11" stroke="#fff" stroke-width="3" /></svg></div>
      </footer>
    </div>

    <section class="viz">
      <div class="ph"><b>Visualizations</b>{@render chev('#333', false)}</div>
      <div class="bv">Build visual</div>
      <div class="modes">
        <div class="sel"><svg width="26" height="26" viewBox="0 0 26 26"><path d="M1 1.500h19" stroke="#252423" stroke-width="1.200" /><g fill="#117865" stroke="#252423" stroke-dasharray="2 1.200"><path d="M1.500 6h23v7.500h-23zM1.500 17h23v7.500h-23z" /></g></svg></div>
        <svg width="26" height="26" viewBox="0 0 26 26" fill="none" stroke="#252423" stroke-width="1.300"><path d="M8 24.500H1.500V1H11l6.500 6v4M11 1v6h6.500" /><path d="M24 9c-4 2-8 6-10 9l3 3c3-3 6-7 7-12zM14 18c-3 0-4 2-4 4-1 2-2 2-3 2 4 2 9 1 10-3" fill="#fff" /></svg>
      </div>
      <svg class="notch" width="180" height="11" viewBox="0 0 180 11"><path d="M0 10.500h17l7-8 8 8h148" fill="none" stroke="#8a8886" /></svg>
      <div class="grid">
        {#each vizIcons as v}<svg width="18" height="18" viewBox="0 0 18 18" overflow="visible">{@html v}</svg>{/each}
      </div>
      <div class="wells">
        <span>Values</span>
        <div class="drop">Add data fields here</div>
        <b>Drill through</b>
        <div class="tog"><span>Cross-report</span><i><em></em>Off</i></div>
        <div class="tog t2"><span>Keep all filters</span><i class="on">On<em></em></i></div>
        <div class="drop d2">Add drill-through fields here</div>
      </div>
    </section>

    <section class="data">
      <div class="ph"><b>Data</b>{@render chev('#333', false)}</div>
      <div class="dsearch">{@render mag(14, '#555')}<span>Search</span></div>
      <div class="list">
        {#each fields as f}
          <div class="field" class:table={f[0] === 't'}>
            {#if f[0] === 't'}
              <svg width="12" height="7" viewBox="0 0 12 7" fill="none" stroke="#777"><path d="M.5.5l5.500 5.500L11.500.5" /></svg>
              <svg width="12" height="12" viewBox="0 0 12 12" fill="none" stroke="#252423" stroke-width="1.200"><rect x=".6" y=".6" width="10.800" height="10.800" rx="1.500" /><path d="M.6 4h10.800M.6 8h10.800M4 .6v10.800M8 .6v10.800" /></svg>
            {:else}
              <i></i>
              <svg width="11" height="12" viewBox="0 0 11 12" fill="none" stroke="#252423" stroke-width="1.200">{#if f[0] === 's'}<path d="M10.500 2.500V.6H.8L6 6 .8 11.400h9.700V9.500" />{/if}</svg>
            {/if}
            <span>{f[1]}</span>
          </div>
        {/each}
        <div class="scroll"></div>
      </div>
    </section>
  </main>

  <footer class="status">
    <span>Page 1 of 1</span>
    <div class="zoom">
      <svg width="122" height="14" viewBox="0 0 122 14"><path d="M0 7.500h5M115 7.500h7M118.500 4v7" stroke="#444" stroke-width="1.300" /><path d="M9 7.500h100M59.500 5v5" stroke="#605e5c" /><path d="M35 2h4v11h-4z" fill="#605e5c" /></svg>
      <span class="pct">60%</span>
      <svg width="16" height="12" viewBox="0 0 16 12" fill="none" stroke="#605e5c"><path d="M.5.5h15v11H.5zM3 4.500v-2h2M11 2.500h2v2M13 7.500v2h-2M5 9.500H3v-2" /></svg>
      <span class="upd">Update available (click to download)</span>
    </div>
  </footer>

  <footer class="task">
    <div class="widget">
      <svg width="28" height="32" viewBox="0 0 28 32"><g fill="#ef8b1c" stroke="#b35a08" stroke-width=".6"><ellipse cx="9" cy="19" rx="9" ry="3.500" /><ellipse cx="11" cy="15.500" rx="9" ry="3.500" /><ellipse cx="8" cy="12" rx="8" ry="3.500" /><ellipse cx="10" cy="8.500" rx="9" ry="3.500" /></g><path d="M6.500 28l5-5 5 5h-3l-2-2-2 2z" fill="#79c70c" /><circle cx="18.500" cy="8" r="8" fill="#ff99a4" /><text x="18.500" y="12.200" font-size="11" text-anchor="middle" fill="#222">1</text></svg>
      <div><span>GBP/EUR</span><span class="up">+0.20%</span></div>
    </div>
    <div class="apps">
      <svg class="start" width="24" height="24" viewBox="0 0 24 24"><defs><linearGradient id="w" x1="0" y1="0" x2="1" y2="1"><stop offset="0" stop-color="#8be3ff" /><stop offset="1" stop-color="#0a86f5" /></linearGradient></defs><path d="M.5.5h11v11H.5zM12.500.5h11v11h-11zM.5 12.500h11v11H.5zM12.500 12.500h11v11h-11z" fill="url(#w)" /></svg>
      <div class="bar">
        <svg width="15" height="17" viewBox="0 0 17 18" fill="none" stroke="#e8eceb" stroke-width="1.900"><circle cx="7.500" cy="7" r="5.800" /><path d="M11.500 11.500l4 5" /></svg><span>Search</span>
        <svg width="42" height="24" viewBox="0 0 42 24"><path d="M1 2c1-1 4 2 7 5 5 3 10 4 14 7 3 2 5 2 9 0-1 3-3 4-6 4-1 3-3 5-6 5 1-2 1-3-1-4C9 18 1 12 1 2z" fill="#6aaede" /><path d="M1 5c3 7 10 10 18 12-6 3-18-1-18-12z" fill="#eef5fa" /><path d="M14 12l-1 7-3 3c-1-3-1-6 1-9z" fill="#4a90c8" /><path d="M17 5c3-5 11-6 16-2 3 2 4 4 5 6l4 0-3 3-2 2c-1-2-2-3-4-3-6 0-12-1-16-6z" fill="#5a9fd4" /><path d="M18 6c4 0 9 2 13 4-5 2-11 0-13-4z" fill="#e4eff8" /><path d="M25 9l-1 5-3 1 1-6z" fill="#3e86c2" /></svg>
      </div>
      <div class="app2"><svg width="24" height="24" viewBox="0 0 24 24"><path d="M5.500.5h18v17h-18z" fill="#f3f3f3" /><path d="M.5 7h14v16H.5z" fill="#8c8c8c" opacity=".85" /></svg></div>
      <div class="app2 dot"><svg width="25" height="24" viewBox="0 0 25 24"><path d="M.5 1h9l2 3h-11z" fill="#e2a10d" /><path d="M.5 4h24v19H.5z" fill="#ffcb45" /><path d="M4 23v-5c0-2 1-2 2-2h12c2 0 2 1 2 2v5z" fill="#1482d8" /><path d="M8 18h8v2H8z" fill="#0b5ba8" /></svg></div>
      <div class="app2 dot"><svg width="24" height="24" viewBox="0 0 24 24"><defs><linearGradient id="e"><stop offset="0" stop-color="#1587dc" /><stop offset=".6" stop-color="#32b9d8" /><stop offset="1" stop-color="#54d45e" /></linearGradient></defs><circle cx="12" cy="12" r="11.500" fill="#1173cc" /><path d="M.5 12C1-4 23-4 23.500 10c0 6-5 8-10 6 3-5-2-9-6-8C4 9 1 12 .5 12z" fill="url(#e)" /><path d="M8.500 9c-3 5 0 12 8 10l5-1c-5 7-16 6-18-3 0-4 2-5 5-6z" fill="#0b4fa0" /><path d="M11.500 10c-2 4-1 8 5 9l5-2c-3 0-7 0-8-1 2-2 1-5-2-6z" fill="#29231f" /></svg></div>
      <div class="app2"><svg width="24" height="24" viewBox="0 0 24 24"><circle cx="12" cy="12" r="11.500" fill="#1ed760" /><path d="M5 8.500c5-1.500 10-1 14 1.200M6 12.500c4-1.200 8-.8 12 1.200M7 16c3-.8 6-.6 9.500 1.200" fill="none" stroke="#131f19" stroke-width="2" stroke-linecap="round" /></svg></div>
      <div class="app2"><svg width="24" height="25" viewBox="0 0 24 25"><path d="M7 7V2h10v5" fill="none" stroke="#2aa6e8" stroke-width="1.800" /><path d="M0 6h24v15c0 2-1 3-3 3H3c-2 0-3-1-3-3z" fill="#f3f3f3" /><path d="M7 10h4.500v4.500H7z" fill="#e8502b" /><path d="M12.500 10H17v4.500h-4.500z" fill="#6bb12c" /><path d="M7 15.500h4.500V20H7z" fill="#2fa4e0" /><path d="M12.500 15.500H17V20h-4.500z" fill="#f7b62a" /></svg></div>
      <div class="app2 dot"><svg width="25" height="25" viewBox="0 0 25 25"><path d="M18 0l6 3v19l-6 3z" fill="#35a8f0" /><path d="M18 0v7L4 18l-3-2v-2zM18 25v-7L4 7 1 9v2z" fill="#0f7bc8" /></svg></div>
      <div class="app2 cur"><svg width="22" height="26" viewBox="0 0 22 26"><path d="M13 0h8v26h-8z" fill="#c98d06" /><path d="M7 7h8v19H7z" fill="#eab42a" /><path d="M1 13h8v13H1z" fill="#f7da5c" /></svg></div>
      <div class="app2 disc"><svg width="30" height="30" viewBox="0 0 30 30"><circle cx="14" cy="17" r="12" fill="#5865f2" /><path d="M8 12c4-2 8-2 12 0 2 3 3 6 2 9l-4 2-1-2h-6l-1 2-4-2c-1-3 0-6 2-9z" fill="#fff" /><circle cx="11" cy="17" r="1.600" fill="#5865f2" /><circle cx="17" cy="17" r="1.600" fill="#5865f2" /><circle cx="22.500" cy="7" r="7" fill="#ee5a5c" /><text x="22.500" y="10.700" font-size="10" font-weight="600" text-anchor="middle" fill="#fff">9+</text></svg></div>
    </div>
    <div class="tray">
      <svg width="12" height="8" viewBox="0 0 12 8" fill="none" stroke="#fff" stroke-width="1.500"><path d="M1 6.500l5-5 5 5" /></svg>
      <svg class="mic" width="12" height="17" viewBox="0 0 12 17" fill="none" stroke="#d58a67" stroke-width="1.300"><rect x="3.500" y=".7" width="5" height="10" rx="2.500" /><path d="M1 8c0 7 10 7 10 0M6 13v3.500" /></svg>
      <div class="lang">ENG<br />US</div>
      <svg width="16" height="13" viewBox="0 0 16 13" fill="none" stroke="#fff" stroke-width="1.400"><path d="M.5 5c4.500-5.500 10.500-5.500 15 0M3 7.500c3-3.500 7-3.500 10 0M5.500 9.700c1.500-1.700 3.500-1.700 5 0" /><circle cx="8" cy="11.500" r="1.200" fill="#fff" stroke="none" /></svg>
      <svg class="vol" width="17" height="14" viewBox="0 0 17 14" fill="none" stroke="#fff" stroke-width="1.200"><path d="M.7 4.500h3L7.500 1v12L3.700 9.500h-3zM9.500 4.500c1.500 1.500 1.500 3.500 0 5M11.500 2.500c3 2.500 3 6.500 0 9M13.500.8c4 3 4 9.400 0 12.400" /></svg>
      <svg class="bat" width="17" height="15" viewBox="0 0 17 15"><path d="M6 3.500h8.500v9H2.500V9" fill="none" stroke="#fff" stroke-width="1.300" /><path d="M6 6h7v5H4zM15 6.500h2v3h-2zM3 0L0 5h2v4l3-5H3z" fill="#fff" /></svg>
      <div class="clock">9:42 PM<br />6/7/2024</div>
      <svg class="bell" width="14" height="17" viewBox="0 0 14 17" fill="#f79a7c"><path d="M7 0c4 0 5.500 2.500 5.500 5v4.500L14 12v1H0v-1l1.500-2.500V5C1.500 2.500 3 0 7 0zM4.500 14h5c-1 3-4 3-5 0z" /></svg>
      <svg class="cop" width="24" height="24" viewBox="0 0 24 24"><path d="M9 1h6c3 0 3 3 4 7h-4l-2 2-4 10H4c-5 0-3-5-2-8C4 5 5 1 9 1z" fill="#269cea" /><path d="M1 14c3-1 5-1 7-5l3-1-3 9-3 3c-4 0-5-3-4-6z" fill="#8ccf4d" /><path d="M14 8h5c5 0 4 4 3 7l-2 5-7 1-4-2z" fill="#c45ae2" /><path d="M10 17l3-8 5 1-3 8z" fill="#f37b75" /><rect x="6" y="15.500" width="18" height="8" rx="2" fill="#fbc60b" /><text x="15" y="22.200" font-size="7" font-weight="700" text-anchor="middle" fill="#222">PRE</text></svg>
    </div>
  </footer>
</div>

<style>
  :global(body) { margin: 0; overflow: hidden; }
  .app { width: 1366px; height: 768px; display: flex; flex-direction: column; font-family: 'Open Sans', 'Noto Sans', sans-serif; font-size: 12px; letter-spacing: -0.35px; color: #252423; background: #fafafa; overflow: hidden; white-space: nowrap; }
  .app :global(svg) { display: block; flex: none; }
  .title { height: 34px; background: #3b3a39; display: flex; align-items: center; color: #fff; flex: none; }
  .save { margin-left: 17px; } .undo { margin-left: 15px; } .redo { margin-left: 14px; }
  .name { margin: 6px 0 0 10px; width: 372px; letter-spacing: -0.27px; }
  .tsearch { width: 400px; height: 24px; background: #d4d4d2; border-radius: 2px; display: flex; align-items: center; box-sizing: border-box; padding-left: 18px; gap: 10px; color: #22594e; font-size: 13.5px; }
  .user { width: 116px; margin-left: 200px; letter-spacing: -0.3px; }
  .avatar { margin-left: 9px; } .win { margin-left: 32px; }
  .tabs { height: 32px; display: flex; align-items: stretch; padding-left: 22px; position: relative; flex: none; font-size: 13.8px; letter-spacing: -0.33px; gap: 32px; }
  .tabs > span { line-height: 33px; height: 28px; }
  .tabs > span:first-child { margin-right: 6px; }
  .tabs .on { font-weight: 600; border-bottom: 3px solid #117865; letter-spacing: -0.75px; }
  .share { margin: 4px 7px 4px auto; width: 83px; background: #117865; border: 0; border-radius: 4px; color: #fff; display: flex; align-items: center; gap: 8px; padding: 0 0 0 7px; font: 600 12px 'Open Sans', sans-serif; letter-spacing: -0.6px; }
  .share b { font-weight: 600; width: 29px; } .share svg:last-child { margin-left: -3px; }
  .ribbon { height: 94px; display: flex; align-items: stretch; padding-top: 4px; box-sizing: border-box; flex: none; box-shadow: 0 1px 4px #0003; z-index: 2; background: #fafafa; }
  .group { border-right: 1px solid #d2d0ce; box-sizing: border-box; display: flex; flex-direction: column; height: 88px; }
  .clip { width: 161px; }
  .row, .cliprow { height: 76px; display: flex; flex: none; }
  .rb, .paste { display: flex; flex-direction: column; align-items: center; padding-top: 5px; box-sizing: border-box; flex: none; }
  .rb > span, .paste > span { line-height: 16px; height: 16px; display: flex; align-items: center; gap: 2px; position: relative; top: 3px; }
  .rb > span { color: #3b3a39; letter-spacing: -0.45px; }
  .rb.off > span { color: #c3c1bf; }
  .cap { text-align: center; font-size: 9.8px; line-height: 14px; letter-spacing: -0.25px; }
  .paste { width: 56px; color: #c8c6c4; }
  .paste svg { margin-left: 4px; }
  .cliplist { color: #c8c6c4; margin-left: -4px; }
  .cliplist div { display: flex; gap: 4px; align-items: center; height: 24px; }
  .collapse { margin: auto 5px 7px auto; }
  main { display: flex; height: 535px; flex: none; }
  .rail { width: 41px; box-sizing: border-box; background: #f3f2f1; border-right: 1px solid #e1dfdd; }
  .rail div { height: 40px; box-sizing: border-box; display: flex; align-items: center; justify-content: center; }
  .rail .active { border-left: 3px solid #117865; padding-right: 1px; }
  .center { width: 963px; display: flex; flex-direction: column; }
  .work { height: 500px; background: #fff; display: flex; }
  .stage { border-right: 1px solid #a8a8a8; padding: 8px 0 0 79px; width: 851px; height: 492px; }
  .report { width: 768px; height: 432px; border: 2px dotted #605e5c; }
  .vt { height: 14px; padding-left: 9px; font: 9.3px/14px 'Noto Sans', sans-serif; letter-spacing: 0.13px; }
  .map { margin-left: 9px; font-family: 'Open Sans', sans-serif; letter-spacing: 0; }
  .lands text { font-size: 18.5px; font-weight: 700; letter-spacing: 2px; text-anchor: middle; paint-order: stroke; fill: #aeaca5; stroke: #d9d7d1; stroke-width: 3.5px; }
  .lands .plain { fill: #a4a4a4; stroke: #f3f3f3; font-size: 19px; }
  .lands .small { font-size: 14px; }
  .lands .big { font-size: 24px; letter-spacing: 5px; }
  .cities text { font-size: 20.5px; fill: #45443f; text-anchor: middle; paint-order: stroke; stroke: #c4c2ba; stroke-opacity: .75; stroke-width: 3.5px; letter-spacing: 0.5px; }
  .filters { width: 32px; display: flex; flex-direction: column; align-items: center; padding-top: 13px; box-sizing: border-box; }
  .filters svg:nth-child(2) { margin: 15px 0 0 4px; }
  .filters b { writing-mode: vertical-rl; font-weight: 600; font-size: 14px; line-height: 16px; margin-top: 7px; margin-right: 1px; letter-spacing: 0.1px; }
  .pages { height: 35px; background: #f3f2f1; display: flex; align-items: center; box-sizing: border-box; }
  .desk { width: 24px; height: 24px; margin-left: 10px; margin-bottom: -1px; display: flex; flex-direction: column; align-items: center; border-bottom: 3px solid #117865; }
  .desk svg { margin-top: 2px; }
  .phone { margin: 0 21px 5px 25px; }
  .page { width: 76px; margin-left: 7px; height: 35px; background: #fff; border-left: 1px solid #888; border-bottom: 4px solid #117865; box-sizing: border-box; text-align: center; line-height: 37px; font-weight: 600; letter-spacing: -0.6px; }
  .add { width: 39px; height: 32px; background: #117865; margin-top: 1px; display: flex; align-items: center; justify-content: center; margin-left: 1px; }
  .viz { width: 182px; box-sizing: border-box; background: #f3f2f1; border-left: 1px solid #e1dfdd; border-right: 1px solid #d8d6d4; }
  .ph { height: 38px; display: flex; align-items: center; justify-content: space-between; padding: 0 8px 0 8px; font-size: 15.5px; letter-spacing: -0.3px; }
  .ph b, .wells b { font-weight: 600; }
  .bv { padding-left: 8px; height: 18px; line-height: 15px; font-weight: 600; font-size: 11.8px; }
  .modes { display: flex; gap: 37px; align-items: center; padding-left: 8px; height: 34px; }
  .sel { width: 32px; height: 32px; background: #d2d0ce; border-radius: 2px; display: flex; align-items: center; justify-content: center; }
  .notch { margin-top: 1px; }
  .grid { display: grid; grid-template-columns: repeat(6, 28px); grid-auto-rows: 28px; padding: 6px 0 6px 6px; border-bottom: 1px solid #d8d6d4; justify-items: center; align-items: center; height: 194px; }
  .wells { padding: 8px 6px 0 4px; color: #3b3a39; }
  .wells > span, .wells > b { display: block; padding-left: 8px; line-height: 18px; }
  .drop { height: 28px; background: #fff; border: 1px dashed #c8c6c4; border-radius: 2px; line-height: 28px; padding-left: 10px; margin: 4px 0 10px; box-sizing: border-box; color: #252423; letter-spacing: -0.3px; }
  .d2 { padding-left: 8px; height: 26px; line-height: 26px; margin-top: 9px; letter-spacing: -0.24px; }
  .tog { display: flex; align-items: center; justify-content: space-between; padding: 0 16px 0 8px; height: 18px; margin-top: 7px; letter-spacing: -0.3px; }
  .t2 { margin-top: 9px; }
  .tog i { width: 32px; height: 16px; border: 1px solid #797775; border-radius: 8px; box-sizing: border-box; font-style: normal; font-size: 9.5px; display: flex; align-items: center; gap: 2px; background: #fff; padding-left: 4px; color: #605e5c; }
  .tog em { width: 8px; height: 8px; border-radius: 4px; background: #605e5c; }
  .tog .on { background: #117865; border-color: #117865; color: #fff; font-weight: 600; }
  .tog .on em { background: #fff; margin-left: 1px; }
  .data { flex: 1; background: #f3f2f1; overflow: hidden; }
  .dsearch { margin: 7px 4px 0; height: 27px; border: 1px solid #605e5c; border-radius: 2px; box-sizing: border-box; display: flex; align-items: center; gap: 7px; padding-left: 7px; font-size: 13.3px; color: #605e5c; }
  .list { position: relative; margin-top: 8px; height: 447px; padding-top: 1px; box-sizing: border-box; overflow: hidden; }
  .field { height: 24px; display: flex; align-items: center; padding-left: 44px; color: #3b3a39; }
  .field i { width: 12px; height: 12px; border: 1px solid #797775; border-radius: 2px; box-sizing: border-box; margin-right: 8px; }
  .field span { margin-left: 7px; }
  .table { padding-left: 13px; }
  .table svg:nth-child(2) { margin-left: 4px; }
  .table span { margin-left: 6px; letter-spacing: -0.33px; }
  .scroll { position: absolute; right: 4px; top: 0; width: 8px; height: 259px; background: #c8c6c4; }
  .status { height: 25px; flex: none; background: #f3f2f1; border-top: 1px solid #e1dfdd; border-bottom: 1px solid #fff; display: flex; align-items: center; justify-content: space-between; padding: 2px 4px 0; color: #4c4a48; box-sizing: border-box; letter-spacing: -0.15px; }
  .zoom { display: flex; align-items: center; }
  .zoom > svg { margin-top: -2px; }
  .pct { margin: -2px 18px 0 14px; width: 24px; letter-spacing: -0.5px; }
  .upd { margin-left: 14px; width: 192px; letter-spacing: -0.25px; }
  .task { height: 48px; box-sizing: border-box; background: linear-gradient(90deg, #10282a 0, #10292b 560px, #2c211e 660px, #2f1e19 740px, #2b221e 840px, #142b29 920px, #172b27 1020px, #112a28 1366px); color: #fff; display: flex; align-items: center; flex: none; }
  .widget { width: 370px; display: flex; align-items: center; font-size: 11.3px; flex: none; letter-spacing: -0.1px; }
  .widget > svg { margin: -4px 4px 0 19px; }
  .widget div { display: flex; flex-direction: column; line-height: 16px; }
  .up { color: #6ccb5f; letter-spacing: 0; }
  .apps { display: flex; align-items: center; width: 609px; flex: none; }
  .bar { width: 220px; height: 32px; border-radius: 16px; background: #ffffff22; border: 1px solid #ffffff25; box-sizing: border-box; margin: 0 4px 0 12px; display: flex; align-items: center; padding-left: 11px; gap: 10px; font-size: 13.3px; color: #dde2e1; flex: none; }
  .bar svg:last-child { margin-left: auto; margin-right: 6px; }
  .app2 { width: 40px; height: 40px; margin-right: 4px; display: flex; align-items: center; justify-content: center; position: relative; box-sizing: border-box; border-radius: 4px; flex: none; }
  .dot::after, .cur::after, .disc::after { content: ''; position: absolute; bottom: 1px; width: 6px; height: 3px; border-radius: 2px; background: #9da09e; }
  .cur { background: #ffffff12; border: 1px solid #ffffff18; } .cur::after { background: #ff8065; width: 16px; }
  .disc { background: #4a2529; } .disc::after { background: #ff99a4; }
  .tray { flex: 1; display: flex; align-items: center; padding-left: 69px; font-size: 11.3px; letter-spacing: -0.2px; }
  .mic { margin-left: 20px; }
  .lang { width: 26px; margin: 0 17px 0 19px; text-align: center; line-height: 16px; }
  .vol { margin-left: 8px; } .bat { margin-left: 7px; }
  .clock { width: 60px; text-align: right; margin-left: 4px; line-height: 16px; letter-spacing: 0.05px; }
  .bell { margin-left: 8px; } .cop { margin-left: 17px; }
</style>
